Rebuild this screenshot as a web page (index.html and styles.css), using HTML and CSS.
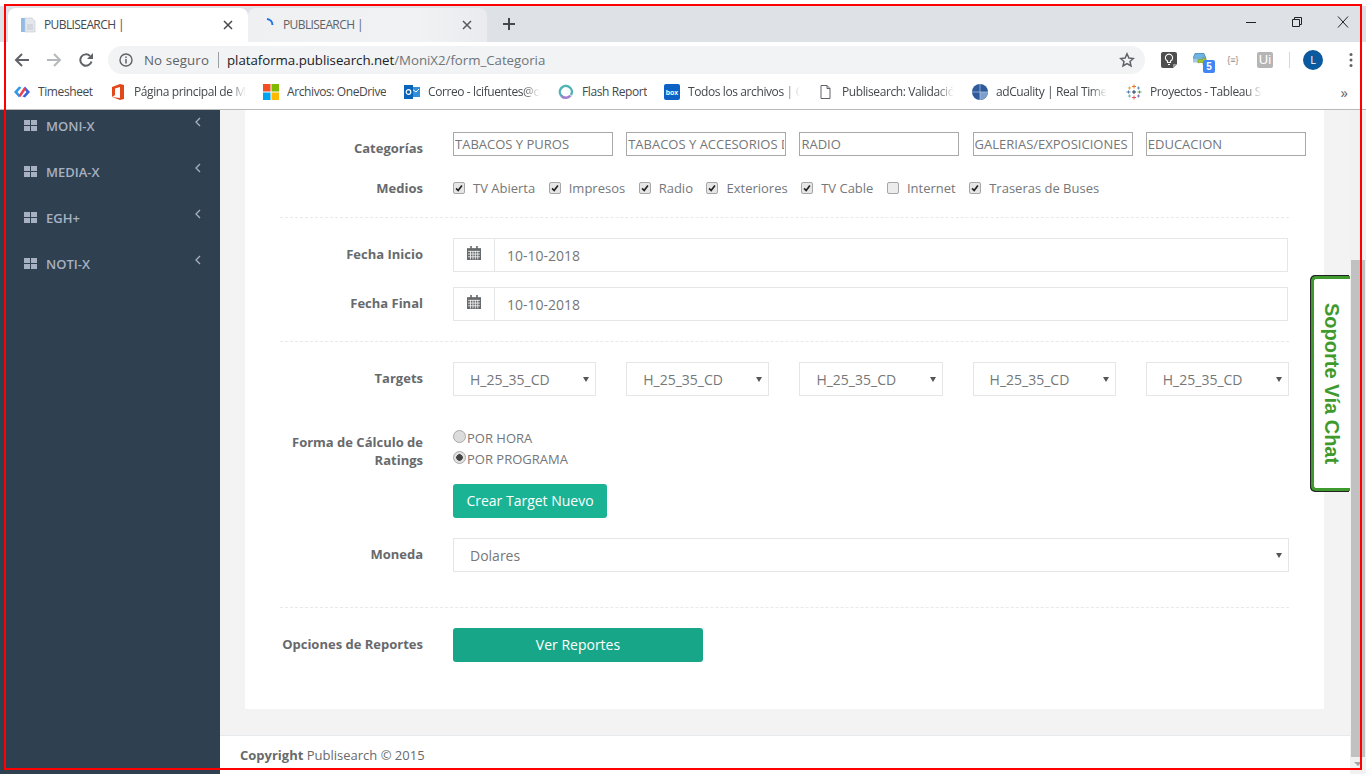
FILE: index.html
```html
<!DOCTYPE html>
<html lang="es">
<head>
<meta charset="utf-8">
<title>PUBLISEARCH |</title>
<link rel="stylesheet" href="styles.css">
</head>
<body>
<div class="app">
  <header class="chrome">
    <div class="tabstrip">
      <div class="tab tab-active">
        <svg class="tab-ico" viewBox="0 0 16 16"><rect x="1" y="1" width="5" height="14" fill="#8fbde6"/><path d="M5 1h7l3 3v11H5z" fill="#e4e7ec" stroke="#c3c8d0" stroke-width=".6"/><path d="M7 8h6M7 10h6M7 12h6" stroke="#c3c8d0"/></svg>
        <span class="tab-title">PUBLISEARCH |</span>
        <svg class="tab-x" viewBox="0 0 10 10"><path d="M1 1l8 8M9 1l-8 8" stroke="#45484c" stroke-width="1.5"/></svg>
      </div>
      <div class="tab tab-bg">
        <svg class="tab-ico" viewBox="0 0 16 16"><path d="M8 2a6 6 0 0 1 5.5 6" fill="none" stroke="#1a73e8" stroke-width="2"/></svg>
        <span class="tab-title tab-title-bg">PUBLISEARCH |</span>
        <svg class="tab-x" viewBox="0 0 10 10"><path d="M1 1l8 8M9 1l-8 8" stroke="#55585c" stroke-width="1.5"/></svg>
      </div>
      <svg class="newtab" viewBox="0 0 14 14"><path d="M7 1v12M1 7h12" stroke="#45484c" stroke-width="2"/></svg>
      <div class="winctl">
        <svg viewBox="0 0 12 12"><path d="M1 6.500h10" stroke="#222" stroke-width="1"/></svg>
        <svg viewBox="0 0 12 12"><path d="M1.500 3.500h7v7h-7zM3.500 3.500V1.500h7v7H8.500" fill="none" stroke="#222"/></svg>
        <svg viewBox="0 0 12 12"><path d="M1 .5l10 11M11 .5l-10 11" stroke="#222" stroke-width="1"/></svg>
      </div>
    </div>
    <div class="toolbar">
      <svg class="nav nav-back" viewBox="0 0 16 16"><path d="M15 8H2M8 2L2 8l6 6" fill="none" stroke="#5f6368" stroke-width="2"/></svg>
      <svg class="nav nav-fwd" viewBox="0 0 16 16"><path d="M1 8h13M8 2l6 6-6 6" fill="none" stroke="#b6b8bb" stroke-width="2"/></svg>
      <svg class="nav nav-reload" viewBox="0 0 16 16"><path d="M13.500 9.500A5.700 5.700 0 1 1 12 4" fill="none" stroke="#5f6368" stroke-width="2"/><path d="M15 1v6H9z" fill="#5f6368"/></svg>
      <div class="omnibox">
        <svg class="info" viewBox="0 0 14 14"><circle cx="7" cy="7" r="6" fill="none" stroke="#5f6368" stroke-width="1.400"/><path d="M7 6v4.500M7 3.500v1.500" stroke="#5f6368" stroke-width="1.500"/></svg>
        <span class="insecure">No seguro</span>
        <span class="omni-sep"></span>
        <span class="url">plataforma.publisearch.net<span class="url-path">/MoniX2/form_Categoria</span></span>
        <svg class="star" viewBox="0 0 16 16"><path d="M8 1.800l1.900 4.200 4.500.5-3.400 3 1 4.500L8 11.700 4 14l1-4.500-3.400-3 4.500-.5z" fill="none" stroke="#5f6368" stroke-width="1.500"/></svg>
      </div>
      <div class="extensions">
        <svg viewBox="0 0 16 16"><path d="M2 0h12a2 2 0 0 1 2 2v10l-4 4H2a2 2 0 0 1-2-2V2a2 2 0 0 1 2-2z" fill="#4e4e4e"/><path d="M12 16v-4h4z" fill="#9a9a9a"/><path d="M6.500 10.500V9A3.600 3.600 0 1 1 9.500 9v1.500zM7 12.500h2" fill="none" stroke="#fff" stroke-width="1.100"/></svg>
        <span class="ext-badged">
          <svg viewBox="0 0 16 16"><path d="M2 1.500h9l2 5H0z" fill="#6fb4e0" stroke="#3c86b8" stroke-width=".8"/><path d="M0 6.500h11v4H0z" fill="#9cc9e8"/><path d="M5 11V7.500h5V5l5 4-5 4v-2.500H7z" fill="#a4c92e" stroke="#6d8f1a" stroke-width=".5"/></svg>
          <span class="badge">5</span>
        </span>
        <span class="ext-txt">{≡}</span>
        <span class="ext-ui">Ui</span>
        <span class="ext-sep"></span>
        <span class="avatar">L</span>
        <svg class="dots" viewBox="0 0 4 16"><circle cx="2" cy="2.500" r="1.500" fill="#5f6368"/><circle cx="2" cy="8" r="1.500" fill="#5f6368"/><circle cx="2" cy="13.500" r="1.500" fill="#5f6368"/></svg>
      </div>
    </div>
    <nav class="bookmarks">
      <div class="bm"><svg viewBox="0 0 16 16"><path d="M5 2.500L0 8l5 5.500 1.500-2L3.500 8l4-4.500z" fill="#2f9be8"/><path d="M11 13.500L16 8l-5-5.500-1.500 2L12.500 8l-4 4.500z" fill="#3f62d8"/><path d="M4.500 11.500L10 3.500l2 1.500-5.500 8z" fill="#ec3f4e"/></svg><span class="bm-label">Timesheet</span></div>
      <div class="bm"><svg viewBox="0 0 16 16"><path d="M2 3L10 0l4 1v14l-4 1-8-3 8 1V3L5 4.500V11l-3 2z" fill="#e2491a"/></svg><span class="bm-label bm-fade">Página principal de Microsoft</span></div>
      <div class="bm"><svg viewBox="0 0 16 16"><rect width="7.500" height="7.500" fill="#f25022"/><rect x="8.500" width="7.500" height="7.500" fill="#7fba00"/><rect y="8.500" width="7.500" height="7.500" fill="#00a4ef"/><rect x="8.500" y="8.500" width="7.500" height="7.500" fill="#ffb900"/></svg><span class="bm-label">Archivos: OneDrive</span></div>
      <div class="bm"><svg viewBox="0 0 16 16"><rect x="6" y="3" width="10" height="10" fill="#2f8fdc" /><path d="M8 5l4 3 3-3" fill="none" stroke="#fff"/><rect y="1" width="9" height="14" fill="#0a64b8"/><circle cx="4.500" cy="8" r="2.300" fill="none" stroke="#fff" stroke-width="1.200"/></svg><span class="bm-label bm-fade">Correo - lcifuentes@outlook</span></div>
      <div class="bm"><svg viewBox="0 0 16 16"><path d="M4 12.500A6 6 0 1 1 13 11" fill="none" stroke="#4fb4b8" stroke-width="2.500"/><path d="M3.500 12a6 6 0 0 0 9-.5" fill="none" stroke="#a07fd0" stroke-width="2.500"/></svg><span class="bm-label">Flash Report</span></div>
      <div class="bm"><svg class="bm-box" viewBox="0 0 16 16"><rect width="16" height="16" rx="2" fill="#0b62c4"/><text x="8" y="10.500" text-anchor="middle" class="box-word">box</text></svg><span class="bm-label bm-fade">Todos los archivos | Cuenta</span></div>
      <div class="bm bm-doc"><svg viewBox="2.500 0 14 16"><path d="M3.500 1.500h6l3 3v10h-9z" fill="#fff" stroke="#5f6368"/><path d="M9.500 1.500v3h3" fill="none" stroke="#5f6368"/></svg><span class="bm-label bm-fade">Publisearch: Validación</span></div>
      <div class="bm"><svg viewBox="0 0 16 16"><circle cx="8" cy="8" r="8" fill="#2f5a9c"/><path d="M8 8h8a8 8 0 0 1-8 8z" fill="#7d9fd0"/><path d="M8 0v16M0 8h16" stroke="#b8c8e0" stroke-width=".7"/></svg><span class="bm-label bm-fade">adCuality | Real Time</span></div>
      <div class="bm"><svg viewBox="0 0 16 16"><path d="M8 .5v4M6 2.500h4" stroke="#e8762b"/><path d="M3.500 2.500v3M2 4h3" stroke="#f0a83a"/><path d="M12.500 2.500v3M11 4h3" stroke="#5a9bc4"/><path d="M.5 8h4M2.500 6.500v3" stroke="#4e79a7"/><path d="M11.500 8h4M13.500 6.500v3" stroke="#59a14f"/><path d="M6 8h4M8 6v4" stroke="#1f3a5f"/><path d="M3.500 10.500v3M2 12h3" stroke="#76b7b2"/><path d="M12.500 10.500v3M11 12h3" stroke="#8f6fc8"/><path d="M8 11.500v4M6 13.500h4" stroke="#e15759"/></svg><span class="bm-label bm-fade">Proyectos - Tableau Server</span></div>
      <span class="bm-more">»</span>
    </nav>
  </header>

  <div class="page">
    <aside class="sidebar">
      <a class="side-item"><svg class="side-ico" viewBox="0 0 13 11"><path d="M0 0h6v5H0zM7 0h6v5H7zM0 6h6v5H0zM7 6h6v5H7z"/></svg><span class="side-text">MONI-X</span><svg class="side-chev" viewBox="0 0 6 10"><path d="M5 1L1 5l4 4" fill="none" stroke-width="1.300"/></svg></a>
      <a class="side-item"><svg class="side-ico" viewBox="0 0 13 11"><path d="M0 0h6v5H0zM7 0h6v5H7zM0 6h6v5H0zM7 6h6v5H7z"/></svg><span class="side-text">MEDIA-X</span><svg class="side-chev" viewBox="0 0 6 10"><path d="M5 1L1 5l4 4" fill="none" stroke-width="1.300"/></svg></a>
      <a class="side-item"><svg class="side-ico" viewBox="0 0 13 11"><path d="M0 0h6v5H0zM7 0h6v5H7zM0 6h6v5H0zM7 6h6v5H7z"/></svg><span class="side-text">EGH+</span><svg class="side-chev" viewBox="0 0 6 10"><path d="M5 1L1 5l4 4" fill="none" stroke-width="1.300"/></svg></a>
      <a class="side-item"><svg class="side-ico" viewBox="0 0 13 11"><path d="M0 0h6v5H0zM7 0h6v5H7zM0 6h6v5H0zM7 6h6v5H7z"/></svg><span class="side-text">NOTI-X</span><svg class="side-chev" viewBox="0 0 6 10"><path d="M5 1L1 5l4 4" fill="none" stroke-width="1.300"/></svg></a>
    </aside>

    <main class="main">
      <section class="panel">
        <div class="row row-cat">
          <label class="lbl lbl-cat">Categorías</label>
          <div class="five">
            <input class="cat" value="TABACOS Y PUROS" readonly>
            <input class="cat" value="TABACOS Y ACCESORIOS DE" readonly>
            <input class="cat" value="RADIO" readonly>
            <input class="cat" value="GALERIAS/EXPOSICIONES" readonly>
            <input class="cat" value="EDUCACION" readonly>
          </div>
        </div>
        <div class="row row-medios">
          <label class="lbl">Medios</label>
          <div class="checks">
            <span class="chk"><span class="box on"><svg viewBox="0 0 12 12"><path d="M2.500 6.500l2.500 2.500 4.500-6" fill="none" stroke="#222" stroke-width="2"/></svg></span>TV Abierta</span>
            <span class="chk"><span class="box on"><svg viewBox="0 0 12 12"><path d="M2.500 6.500l2.500 2.500 4.500-6" fill="none" stroke="#222" stroke-width="2"/></svg></span>Impresos</span>
            <span class="chk"><span class="box on"><svg viewBox="0 0 12 12"><path d="M2.500 6.500l2.500 2.500 4.500-6" fill="none" stroke="#222" stroke-width="2"/></svg></span>Radio</span>
            <span class="chk"><span class="box on"><svg viewBox="0 0 12 12"><path d="M2.500 6.500l2.500 2.500 4.500-6" fill="none" stroke="#222" stroke-width="2"/></svg></span>Exteriores</span>
            <span class="chk"><span class="box on"><svg viewBox="0 0 12 12"><path d="M2.500 6.500l2.500 2.500 4.500-6" fill="none" stroke="#222" stroke-width="2"/></svg></span>TV Cable</span>
            <span class="chk"><span class="box"></span>Internet</span>
            <span class="chk"><span class="box on"><svg viewBox="0 0 12 12"><path d="M2.500 6.500l2.500 2.500 4.500-6" fill="none" stroke="#222" stroke-width="2"/></svg></span>Traseras de Buses</span>
          </div>
        </div>
        <hr class="dash dash-1">
        <div class="row row-date">
          <label class="lbl lbl-field">Fecha Inicio</label>
          <div class="date">
            <span class="addon"><svg viewBox="0 0 13 13"><path d="M0 2h13v11H0z" fill="#676a6c"/><path d="M3 0h1.500v3.500H3zM8.500 0H10v3.500H8.500z" fill="#676a6c"/><path d="M1 5h11M1 7.500h11M1 10h11M3.250 4.500V12.500M5.500 4.500V12.500M7.750 4.500V12.500M10 4.500V12.500" stroke="#fff" stroke-width=".7"/></svg></span>
            <input class="date-input" value="10-10-2018" readonly>
          </div>
        </div>
        <div class="row row-date row-date-2">
          <label class="lbl lbl-field">Fecha Final</label>
          <div class="date">
            <span class="addon"><svg viewBox="0 0 13 13"><path d="M0 2h13v11H0z" fill="#676a6c"/><path d="M3 0h1.500v3.500H3zM8.500 0H10v3.500H8.500z" fill="#676a6c"/><path d="M1 5h11M1 7.500h11M1 10h11M3.250 4.500V12.500M5.500 4.500V12.500M7.750 4.500V12.500M10 4.500V12.500" stroke="#fff" stroke-width=".7"/></svg></span>
            <input class="date-input" value="10-10-2018" readonly>
          </div>
        </div>
        <hr class="dash dash-2">
        <div class="row row-targets">
          <label class="lbl lbl-field">Targets</label>
          <div class="five">
            <span class="sel"><select><option>H_25_35_CD</option></select></span>
            <span class="sel"><select><option>H_25_35_CD</option></select></span>
            <span class="sel"><select><option>H_25_35_CD</option></select></span>
            <span class="sel"><select><option>H_25_35_CD</option></select></span>
            <span class="sel"><select><option>H_25_35_CD</option></select></span>
          </div>
        </div>
        <div class="row row-calc">
          <label class="lbl lbl-calc">Forma de Cálculo de Ratings</label>
          <div class="calc">
            <span class="radio-line"><span class="radio"></span>POR HORA</span>
            <span class="radio-line"><span class="radio radio-on"></span>POR PROGRAMA</span>
            <button class="btn btn-new" type="button">Crear Target Nuevo</button>
          </div>
        </div>
        <div class="row row-moneda">
          <label class="lbl lbl-field">Moneda</label>
          <span class="sel"><select><option>Dolares</option></select></span>
        </div>
        <hr class="dash dash-3">
        <div class="row row-rep">
          <label class="lbl lbl-field">Opciones de Reportes</label>
          <button class="btn btn-rep" type="button">Ver Reportes</button>
        </div>
      </section>
      <footer class="footer"><strong>Copyright</strong> Publisearch © 2015</footer>
    </main>

    <div class="scrollbar"><div class="thumb"></div><span class="scroll-down"></span></div>
  </div>

  <a class="chat"><span class="chat-text">Soporte Vía Chat</span></a>
  <div class="redframe"></div>
</div>
</body>
</html>
```

FILE: styles.css
```css
* { box-sizing: border-box; }
html, body { margin: 0; height: 100%; overflow: hidden; }
body { font-family: "Open Sans", "Liberation Sans", sans-serif; color: #676a6c; background: #fff; }
.app { position: relative; width: 1366px; height: 774px; display: flex; flex-direction: column; overflow: hidden; }

/* browser chrome */
.chrome { flex: none; height: 110px; display: flex; flex-direction: column; background: #fff; border-bottom: 1px solid #b9b9b9; }
.tabstrip { flex: none; margin-top: 6px; height: 36px; padding: 2px 0 0 8px; background: #dee1e6; display: flex; align-items: stretch; position: relative; }
.tab { width: 240px; display: flex; align-items: center; padding: 0 15px 0 12px; border-radius: 8px 8px 0 0; }
.tab-active { background: #fff; }
.tab-bg { width: 239px; padding-left: 11px; background: linear-gradient(90deg, #eef0f2, #f1f2f4 70%, #e9ebee); }
.tab-ico { width: 16px; height: 16px; flex: none; }
.tab-title { margin: -2px 0 0 8px; flex: 1; font-size: 12px; color: #45484c; letter-spacing: -.6px; }
.tab-title-bg { color: #5f6368; }
.tab-x { width: 10px; height: 10px; flex: none; }
.newtab { width: 14px; height: 14px; margin: 9px 0 0 15px; }
.winctl { margin-left: auto; display: flex; gap: 34px; padding: 8px 17px 0 0; align-items: flex-start; }
.winctl svg { width: 12px; height: 12px; }

.toolbar { height: 32px; margin-top: 2px; display: flex; align-items: center; flex: none; }
.nav { width: 16px; height: 16px; flex: none; }
.nav-back { margin-left: 14px; }
.nav-fwd { margin-left: 16px; }
.nav-reload { margin-left: 16px; }
.omnibox { margin-left: 14px; width: 1037px; height: 28px; border-radius: 14px; background: #f1f3f4; display: flex; align-items: center; padding: 0 10px 0 11px; font-size: 13.3px; }
.info { width: 14px; height: 14px; flex: none; }
.insecure { margin-left: 11px; color: #5f6368; letter-spacing: .1px; }
.omni-sep { width: 1px; height: 16px; background: #9aa0a6; margin: 0 8px 0 9px; }
.url { color: #202124; flex: 1; letter-spacing: -.04px; }
.url-path { color: #70757a; }
.star { width: 16px; height: 16px; flex: none; }
.extensions { display: flex; align-items: center; margin-left: 16px; }
.extensions > svg { width: 16px; height: 16px; }
.ext-badged { position: relative; width: 16px; height: 16px; margin-left: 16px; }
.ext-badged svg { width: 16px; height: 16px; display: block; }
.badge { position: absolute; left: 10px; top: 8px; width: 12px; height: 13px; background: #4285f4; color: #fff; font: 700 10px/13px "Liberation Sans", sans-serif; text-align: center; border-radius: 2px; }
.ext-txt { width: 16px; margin-left: 16px; font: 9px/16px "Liberation Sans", sans-serif; color: #8a8a8a; text-align: center; white-space: nowrap; }
.ext-ui { width: 16px; height: 16px; margin-left: 16px; background: #b5b5b5; border-radius: 2px; color: #fff; font: 13px/16px "Liberation Sans", sans-serif; text-align: center; }
.ext-sep { width: 1px; height: 16px; background: #d5d7da; margin: 0 13px 0 16px; }
.avatar { width: 20px; height: 20px; border-radius: 50%; background: #0b5a9e; color: #fff; font-size: 11px; line-height: 20px; text-align: center; }
.dots { width: 4px; height: 16px; margin-left: 20px; }

.bookmarks { flex: none; height: 33px; padding: 0 0 2px 14px; display: grid; grid-template-columns: 96px 153px 141px 154px 106px 156px 152px 154px 154px 1fr; align-items: center; }
.bm { display: flex; align-items: center; gap: 8px; min-width: 0; }
.bm svg { width: 16px; height: 16px; flex: none; }
.bm-doc svg { width: 14px; }
.box-word { font: 700 7px "Liberation Sans", sans-serif; fill: #fff; }
.bm-label { font-size: 12px; color: #45484c; white-space: nowrap; overflow: hidden; max-width: 112px; letter-spacing: -.4px; }
.bm-fade { -webkit-mask-image: linear-gradient(90deg, #000 85%, transparent); mask-image: linear-gradient(90deg, #000 85%, transparent); }
.bm-more { font-size: 15px; color: #5f6368; justify-self: end; padding-right: 18px; }

/* page */
.page { flex: 1; min-height: 0; display: flex; }
.sidebar { width: 220px; flex: none; background: #2f4050; padding-top: 5px; display: flex; flex-direction: column; }
.side-item { height: 46px; display: flex; align-items: flex-start; padding: 2px 0 0 24px; color: #a7b1c2; }
.side-ico { width: 13px; height: 11px; fill: #a7b1c2; margin-top: 3px; flex: none; }
.side-text { margin-left: 9px; font-size: 13px; line-height: 18px; font-weight: 600; }
.side-chev { width: 6px; height: 10px; margin: 0 0 0 auto; stroke: #a7b1c2; position: relative; left: -19px; top: 0; }

.main { flex: 1; min-width: 0; display: flex; flex-direction: column; background: #f3f3f4; }
.panel { flex: none; height: 599px; margin: 0 26px 0 25px; padding: 22px 35px 0; background: #fff; }
.row { display: grid; grid-template-columns: 143px minmax(0, 1fr); column-gap: 30px; align-items: start; }
.lbl { font-size: 13px; line-height: 18px; font-weight: 700; text-align: right; color: #676a6c; }
.lbl-cat { padding-top: 7px; }
.lbl-field { padding-top: 7px; }
.five { display: grid; grid-template-columns: repeat(5, minmax(0, 1fr)); column-gap: 30px; }
.cat { width: 160px; height: 24px; border: 1px solid #a9a9a9; padding: 0 1px; font: 13px "Open Sans", sans-serif; color: #757779; background: #fff; outline: 0; }
.row-medios { margin-top: 21px; }
.checks { display: flex; gap: 13.500px; height: 20px; align-items: center; font-size: 13px; line-height: 20px; color: #757779; }
.row-medios .lbl { line-height: 20px; }
.chk { display: inline-flex; align-items: center; gap: 8px; white-space: nowrap; }
.box { width: 12px; height: 12px; border: 1px solid #a6a6a6; border-radius: 2px; background: #ececec; display: block; }
.box.on { background: #e6e6e6; }
.box svg { display: block; width: 10px; height: 10px; }
.dash { border: 0; border-top: 1px dashed #e7eaec; margin: 0; }
.dash-1 { margin-top: 19px; }
.row-date { margin-top: 20px; }
.row-date-2 { margin-top: 15px; }
.date { display: flex; height: 34px; margin-right: 1px; border: 1px solid #e5e6e7; }
.addon { width: 41px; flex: none; border-right: 1px solid #e5e6e7; display: flex; align-items: center; justify-content: center; }
.addon svg { width: 14px; height: 14px; margin-top: -4px; }
.date-input { flex: 1; min-width: 0; border: 0; padding: 0 12px; font: 14px "Open Sans", sans-serif; color: #757779; outline: 0; background: #fff; }
.dash-2 { margin-top: 20px; }
.row-targets { margin-top: 20px; }
.sel { position: relative; display: block; height: 34px; }
.sel select { width: 100%; height: 34px; -webkit-appearance: none; appearance: none; border: 1px solid #e5e6e7; border-radius: 0; background: #fff; padding: 1px 12px 0 16px; font: 14px "Open Sans", sans-serif; color: #757779; outline: 0; opacity: 1; }
.sel::after { content: ""; position: absolute; right: 7px; top: 15px; border-style: solid; border-color: #555 transparent transparent; border-width: 5px 3px 0; }
.row-calc { margin-top: 32px; }
.lbl-calc { padding-top: 5px; }
.calc { display: flex; flex-direction: column; align-items: flex-start; font-size: 13px; line-height: 21px; }
.radio-line { display: flex; align-items: center; height: 21px; color: #757779; }
.radio { width: 13px; height: 13px; border-radius: 50%; background: #dcdcdc; border: 1px solid #a9a9a9; margin: -4px 1px 0 0; display: block; }
.radio-on { background: radial-gradient(circle, #444 0 3px, #e0e0e0 3.500px); }
.btn { border: 0; color: #fff; font: 14px "Open Sans", sans-serif; height: 34px; border-radius: 3px; padding: 0 0 2px; }
.btn-new { width: 154px; margin-top: 14px; background: #1ab394; }
.row-moneda { margin-top: 20px; }
.dash-3 { margin-top: 35px; }
.row-rep { margin-top: 20px; }
.btn-rep { width: 250px; background: #18a689; font-weight: 500; }
.footer { margin-top: 26px; flex: 1; background: #fff; border-top: 1px solid #e7eaec; padding: 10px 20px 0; font-size: 13px; line-height: 18px; color: #676a6c; }

.scrollbar { width: 16px; flex: none; background: #f1f1f1; padding-top: 150px; display: flex; flex-direction: column; align-items: center; }
.thumb { width: 14px; height: 497px; background: #c1c1c1; }
.scroll-down { margin-top: 5px; border: 4px solid transparent; border-top: 4px solid #a3a3a3; border-bottom: 0; }

.chat { position: absolute; left: 1311px; top: 276px; width: 39px; height: 215px; background: #fff; border: 3px solid #3f9a2e; border-right: 0; border-radius: 5px 0 0 5px; box-shadow: -1px -1px 0 #222, -1px 1px 0 #222; display: flex; align-items: center; justify-content: center; }
.chat-text { writing-mode: vertical-rl; font: 700 20px/1 "Liberation Sans", sans-serif; color: #3f9a2e; white-space: nowrap; }

.redframe { position: absolute; left: 4px; top: 4px; width: 1358px; height: 766px; border: 2px solid #f00; pointer-events: none; }
```
